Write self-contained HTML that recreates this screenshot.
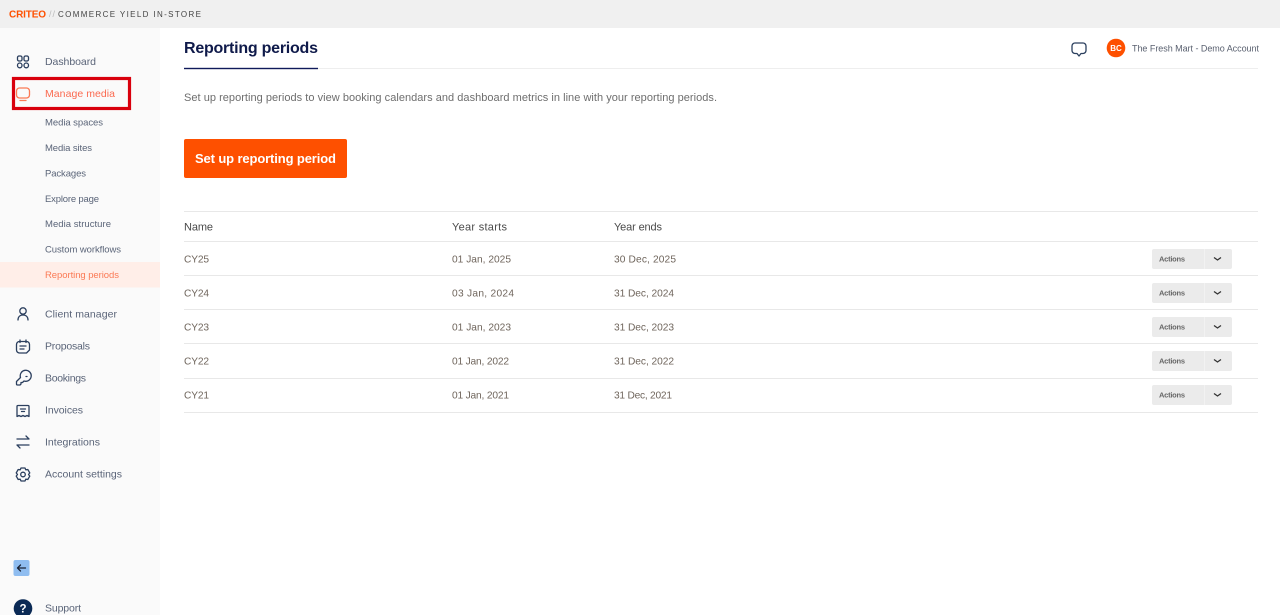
<!DOCTYPE html>
<html lang="en"><head><meta charset="utf-8"><title>Reporting periods</title>
<style>
html,body{margin:0;padding:0;width:1280px;height:615px;overflow:hidden;background:#fff}
svg{display:block}
text{font-family:"Liberation Sans",sans-serif}
.n{font-size:10.5px;fill:#5a6478}
.s{font-size:9.5px;fill:#5a6478}
.t{font-size:10.2px;fill:#6f655c}
.h{font-size:11px;fill:#4a4a4a}
.a{font-size:7.5px;font-weight:700;fill:#666}
.i{fill:none;stroke:#2b3f5e;stroke-width:1.3;stroke-linecap:round;stroke-linejoin:round}
</style></head><body>
<svg width="1280" height="615" viewBox="0 0 1280 615" xmlns="http://www.w3.org/2000/svg">
<rect width="1280" height="28" fill="#f0f0f0"/>
<rect y="28" width="160" height="587" fill="#fafafa"/>
<text x="9" y="17.500" font-size="10" font-weight="700" fill="#fe5000" textLength="37">CRITEO</text>
<text x="49" y="17" font-size="9" fill="#bbb" textLength="6">//</text>
<text x="58" y="17" font-size="8" fill="#444" textLength="143">COMMERCE YIELD IN-STORE</text>

<g class="i">
<rect x="17.500" y="56" width="4.500" height="5" rx="1.500"/><rect x="24" y="56" width="4.500" height="5" rx="1.500"/><rect x="17.500" y="63" width="4.500" height="4.800" rx="2.300"/><rect x="24" y="63" width="4.500" height="4.800" rx="2.300"/>
<circle cx="23" cy="311" r="3.200"/><path d="M18 320c0-3.200 2-5 5-5s5 1.800 5 5"/>
<path d="M19.500 341.500h7a3 3 0 0 1 3 3v5.500l-3 3h-7a3 3 0 0 1-3-3v-5.500a3 3 0 0 1 3-3zM20 340v2.500M26 340v2.500M20 346h6M20 349h4"/>
<path d="M20.500 377.500a5.500 5.500 0 1 1 3.500 3.500l-1.500 1.500h-1.500v1.500l-1 1h-2.500a1 1 0 0 1-1-1v-2.500zM26 376.500h1"/>
<path d="M18 405.500h10a1 1 0 0 1 1 1v10l-2-1-2 1-2-1-2 1-2-1-2 1v-10a1 1 0 0 1 1-1zM20.500 409h5M21.500 411.500h3"/>
<path d="M17 439h12l-3-3M29 445H17l3 3"/>
<circle cx="23" cy="474.500" r="2.300"/><path d="M21 468h4l.8 1.800 2-.3 2 3.400-1.300 1.600 1.300 1.600-2 3.400-2-.3-.8 1.800h-4l-.8-1.800-2 .3-2-3.400 1.300-1.600-1.300-1.600 2-3.400 2 .3z"/>
<path d="M1075 43h8a3 3 0 0 1 3 3v4.500a3 3 0 0 1-3 3h-2L1079 56l-2-2.500h-2a3 3 0 0 1-3-3V46a3 3 0 0 1 3-3z"/>
</g>
<rect x="13.500" y="78.500" width="116" height="30" fill="none" stroke="#d9000d" stroke-width="3.200"/>
<path d="M19.500 88h7a3 3 0 0 1 3 3v4a3 3 0 0 1-3 3h-7a3 3 0 0 1-3-3v-4a3 3 0 0 1 3-3zM20 100.500h6" fill="none" stroke="#fb7a55" stroke-width="1.300" stroke-linecap="round"/>

<text class="n" x="45" y="65" textLength="51">Dashboard</text>
<text x="45" y="97" font-size="10.5" fill="#fb6a50" textLength="70">Manage media</text>
<text class="s" x="45" y="125.500" textLength="58">Media spaces</text>
<text class="s" x="45" y="151" textLength="47">Media sites</text>
<text class="s" x="45" y="176.500" textLength="41">Packages</text>
<text class="s" x="45" y="202" textLength="54">Explore page</text>
<text class="s" x="45" y="227" textLength="66">Media structure</text>
<text class="s" x="45" y="252.500" textLength="76">Custom workflows</text>
<rect y="262" width="160" height="25.500" fill="#ffeee8"/>
<text x="45" y="278" font-size="9.500" fill="#fb7a55" textLength="74">Reporting periods</text>
<text class="n" x="45" y="317.500" textLength="72">Client manager</text>
<text class="n" x="45" y="349.500" textLength="45">Proposals</text>
<text class="n" x="45" y="381.500" textLength="41">Bookings</text>
<text class="n" x="45" y="413.500" textLength="38">Invoices</text>
<text class="n" x="45" y="445.500" textLength="55">Integrations</text>
<text class="n" x="45" y="477.500" textLength="77">Account settings</text>
<rect x="13.500" y="560" width="16" height="16" rx="2" fill="#8fbdf0"/>
<path d="M25.500 568h-8M20.500 565l-3 3 3 3" fill="none" stroke="#1a2233" stroke-width="1.300" stroke-linecap="round" stroke-linejoin="round"/>
<circle cx="23" cy="608.500" r="9.300" fill="#0b2a55"/>
<text x="23" y="612.500" font-size="11.500" font-weight="700" fill="#fff" text-anchor="middle">?</text>
<text class="n" x="45" y="611.500" textLength="36">Support</text>

<text x="184" y="53" font-size="16" font-weight="700" fill="#0f1a4a" textLength="134">Reporting periods</text>
<rect x="184" y="68" width="1074" height="1" fill="#eeeeee"/>
<rect x="184" y="67.800" width="134" height="1.400" fill="#0f1a5a"/>
<circle cx="1116" cy="48" r="9.300" fill="#fe5000"/>
<text x="1116" y="51" font-size="8" font-weight="700" fill="#fff" text-anchor="middle">BC</text>
<text x="1132" y="51.500" font-size="9" fill="#5a6170" textLength="127">The Fresh Mart - Demo Account</text>
<text x="184" y="101" font-size="11" fill="#6e6e6e" textLength="533">Set up reporting periods to view booking calendars and dashboard metrics in line with your reporting periods.</text>
<rect x="184" y="139" width="163" height="39" rx="2" fill="#fe5000"/>
<text x="195" y="163" font-size="13" font-weight="700" fill="#fff" textLength="141">Set up reporting period</text>

<g fill="#e8e8e8">
<rect x="184" y="211" width="1074" height="1"/><rect x="184" y="241" width="1074" height="1"/><rect x="184" y="275" width="1074" height="1"/><rect x="184" y="309" width="1074" height="1"/><rect x="184" y="343" width="1074" height="1"/><rect x="184" y="378" width="1074" height="1"/><rect x="184" y="412" width="1074" height="1"/>
</g>
<text class="h" x="184" y="230.500" textLength="29">Name</text>
<text class="h" x="452" y="230.500" textLength="55">Year starts</text>
<text class="h" x="614" y="230.500" textLength="48">Year ends</text>

<text class="t" x="184" y="262.500" textLength="25">CY25</text><text class="t" x="452" y="262.500" textLength="59">01 Jan, 2025</text><text class="t" x="614" y="262.500" textLength="62">30 Dec, 2025</text>
<text class="t" x="184" y="296.500" textLength="25">CY24</text><text class="t" x="452" y="296.500" textLength="62">03 Jan, 2024</text><text class="t" x="614" y="296.500" textLength="60">31 Dec, 2024</text>
<text class="t" x="184" y="330.500" textLength="25">CY23</text><text class="t" x="452" y="330.500" textLength="59">01 Jan, 2023</text><text class="t" x="614" y="330.500" textLength="60">31 Dec, 2023</text>
<text class="t" x="184" y="364.500" textLength="25">CY22</text><text class="t" x="452" y="364.500" textLength="57">01 Jan, 2022</text><text class="t" x="614" y="364.500" textLength="60">31 Dec, 2022</text>
<text class="t" x="184" y="398.500" textLength="25">CY21</text><text class="t" x="452" y="398.500" textLength="57">01 Jan, 2021</text><text class="t" x="614" y="398.500" textLength="58">31 Dec, 2021</text>

<g>
<rect x="1152" y="249" width="80" height="20" rx="2" fill="#ebebeb"/><rect x="1204" y="249" width="1" height="20" fill="#f2f2f2"/><text class="a" x="1159" y="261.500" textLength="26">Actions</text><path d="M1214 257.500l3.500 2.500 3.500-2.500" fill="none" stroke="#333" stroke-width="1.300"/>
<rect x="1152" y="283" width="80" height="20" rx="2" fill="#ebebeb"/><rect x="1204" y="283" width="1" height="20" fill="#f2f2f2"/><text class="a" x="1159" y="295.500" textLength="26">Actions</text><path d="M1214 291.500l3.500 2.500 3.500-2.500" fill="none" stroke="#333" stroke-width="1.300"/>
<rect x="1152" y="317" width="80" height="20" rx="2" fill="#ebebeb"/><rect x="1204" y="317" width="1" height="20" fill="#f2f2f2"/><text class="a" x="1159" y="329.500" textLength="26">Actions</text><path d="M1214 325.500l3.500 2.500 3.500-2.500" fill="none" stroke="#333" stroke-width="1.300"/>
<rect x="1152" y="351" width="80" height="20" rx="2" fill="#ebebeb"/><rect x="1204" y="351" width="1" height="20" fill="#f2f2f2"/><text class="a" x="1159" y="363.500" textLength="26">Actions</text><path d="M1214 359.500l3.500 2.500 3.500-2.500" fill="none" stroke="#333" stroke-width="1.300"/>
<rect x="1152" y="385" width="80" height="20" rx="2" fill="#ebebeb"/><rect x="1204" y="385" width="1" height="20" fill="#f2f2f2"/><text class="a" x="1159" y="397.500" textLength="26">Actions</text><path d="M1214 393.500l3.500 2.500 3.500-2.500" fill="none" stroke="#333" stroke-width="1.300"/>
</g>
</svg>
</body></html>
